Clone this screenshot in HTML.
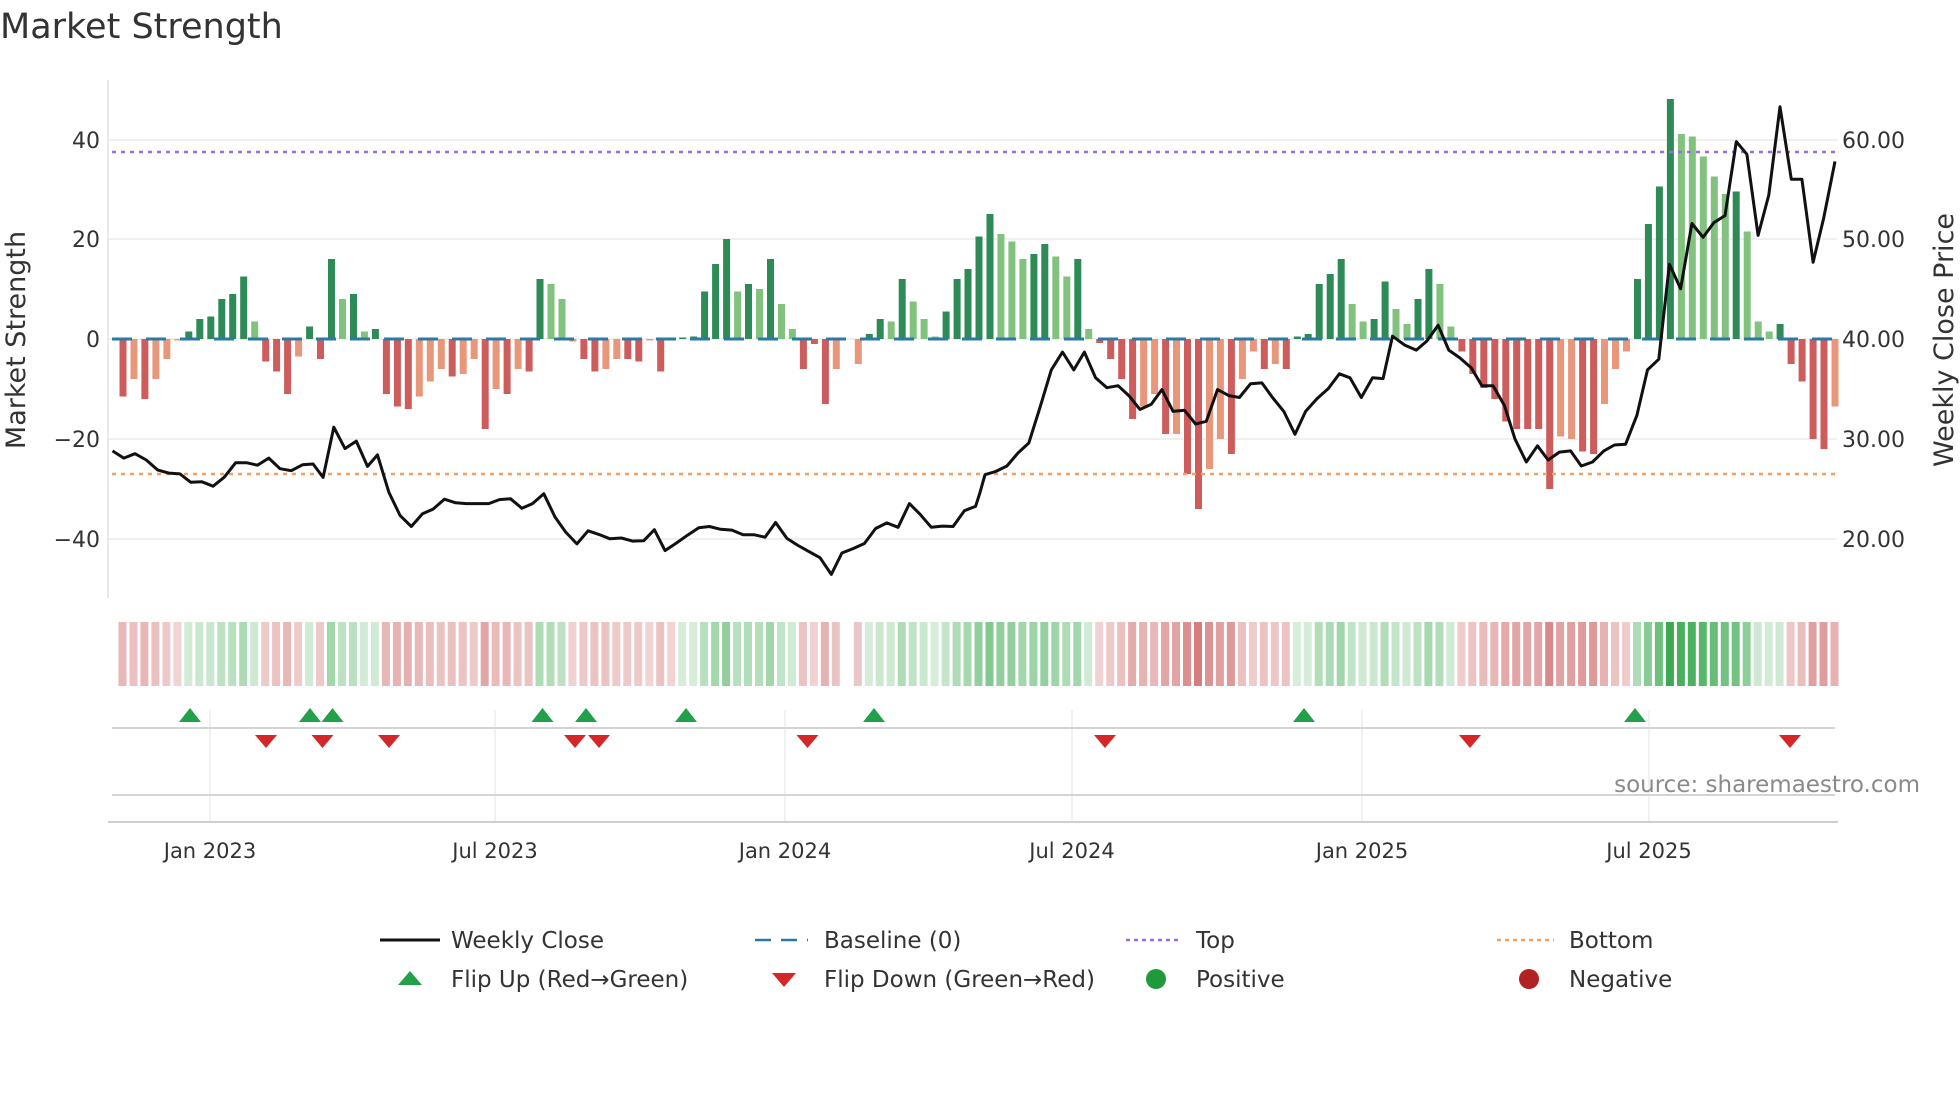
<!DOCTYPE html>
<html><head><meta charset="utf-8">
<style>
html,body{margin:0;padding:0;background:#fff;}
body{width:1960px;height:1102px;overflow:hidden;font-family:"DejaVu Sans","Liberation Sans",sans-serif;}
svg text{font-family:"DejaVu Sans","Liberation Sans",sans-serif;}
</style></head>
<body>
<svg id="s" width="1960" height="1102" xmlns="http://www.w3.org/2000/svg">
<text x="0" y="38" font-size="35" fill="#333">Market Strength</text>
<g stroke="#ececec" stroke-width="1.5">
<line x1="108" y1="140" x2="1837" y2="140"/><line x1="108" y1="239" x2="1837" y2="239"/>
<line x1="108" y1="339" x2="1837" y2="339"/><line x1="108" y1="439" x2="1837" y2="439"/>
<line x1="108" y1="539" x2="1837" y2="539"/>
</g>
<line x1="108" y1="80" x2="108" y2="598" stroke="#e4e4e4" stroke-width="1.5"/>
<g font-size="22" fill="#333" text-anchor="end">
<text x="100" y="148">40</text><text x="100" y="247">20</text><text x="100" y="347">0</text>
<text x="100" y="447">−20</text><text x="100" y="547">−40</text>
</g>
<g font-size="22" fill="#333">
<text x="1842" y="148">60.00</text><text x="1842" y="247">50.00</text><text x="1842" y="347">40.00</text>
<text x="1842" y="447">30.00</text><text x="1842" y="547">20.00</text>
</g>
<text transform="translate(25,340) rotate(-90)" font-size="27" fill="#333" text-anchor="middle">Market Strength</text>
<text transform="translate(1953,340) rotate(-90)" font-size="27" fill="#333" text-anchor="middle">Weekly Close Price</text>
<g id="bars"></g>
<line x1="112" y1="339" x2="1837" y2="339" stroke="#2b7aa6" stroke-width="3" stroke-dasharray="20 14"/>
<line x1="112" y1="152" x2="1837" y2="152" stroke="#9b6ee0" stroke-width="2.5" stroke-dasharray="4 5"/>
<line x1="112" y1="474" x2="1837" y2="474" stroke="#f0a060" stroke-width="2.5" stroke-dasharray="4 5"/>
<polyline id="price" fill="none" stroke="#111" stroke-width="3" stroke-linejoin="round"/>
<g id="heat"></g>
<g stroke="#ececec" stroke-width="1.5">
<line x1="210" y1="710" x2="210" y2="822"/><line x1="495" y1="710" x2="495" y2="822"/>
<line x1="785" y1="710" x2="785" y2="822"/><line x1="1072" y1="710" x2="1072" y2="822"/>
<line x1="1362" y1="710" x2="1362" y2="822"/><line x1="1649" y1="710" x2="1649" y2="822"/>
</g>
<line x1="112" y1="728" x2="1835" y2="728" stroke="#d4d4d4" stroke-width="2"/>
<line x1="112" y1="795" x2="1835" y2="795" stroke="#d4d4d4" stroke-width="2"/>
<line x1="108" y1="822" x2="1838" y2="822" stroke="#cfcfcf" stroke-width="2"/>
<g id="marks"></g>
<text x="1920" y="792" font-size="23" fill="#8a8a8a" text-anchor="end">source: sharemaestro.com</text>
<g font-size="21" fill="#333" text-anchor="middle">
<text x="210" y="858">Jan 2023</text><text x="495" y="858">Jul 2023</text><text x="785" y="858">Jan 2024</text>
<text x="1072" y="858">Jul 2024</text><text x="1362" y="858">Jan 2025</text><text x="1649" y="858">Jul 2025</text>
</g>
<g font-size="23" fill="#333">
<line x1="380" y1="940" x2="440" y2="940" stroke="#111" stroke-width="3"/>
<text x="451" y="948">Weekly Close</text>
<line x1="755" y1="940" x2="808" y2="940" stroke="#2b7aa6" stroke-width="2.5" stroke-dasharray="16 10"/>
<text x="824" y="948">Baseline (0)</text>
<line x1="1126" y1="940" x2="1181" y2="940" stroke="#9b6ee0" stroke-width="2.5" stroke-dasharray="4 4"/>
<text x="1196" y="948">Top</text>
<line x1="1497" y1="940" x2="1554" y2="940" stroke="#f0a060" stroke-width="2.5" stroke-dasharray="4 4"/>
<text x="1569" y="948">Bottom</text>
<polygon points="398,985 422,985 410,971" fill="#22a04a"/>
<text x="451" y="987">Flip Up (Red→Green)</text>
<polygon points="772,973 796,973 784,987" fill="#d62728"/>
<text x="824" y="987">Flip Down (Green→Red)</text>
<circle cx="1156" cy="979" r="10" fill="#1f9a3a"/>
<text x="1196" y="987">Positive</text>
<circle cx="1529" cy="979" r="10" fill="#b22222"/>
<text x="1569" y="987">Negative</text>
</g>
</svg>
<script>
var data="-11.5R -8S -12R -8S -4S -0.3S 1.5D 4D 4.5D 8D 9D 12.5D 3.5L -4.5R -6.5R -11R -3.5S 2.5D -4R 16D 8L 9D 1.5L 2D -11R -13.5R -14R -11.5S -8.5S -6S -7.5R -7S -4S -18R -10S -11R -6S -6.5R 12D 11L 8L -0.5S -4R -6.5R -6S -4S -4R -4.5R -0.3S -6.5R -0.3S 0.3D 0.5D 9.5D 15D 20D 9.5L 11D 10L 16D 7L 2L -6R -1R -13R -6S 0X -5S 1D 4D 3.5L 12D 7.5L 4L 0.5L 5.5D 12D 14D 20.5D 25D 21L 19.5L 16L 17D 19D 16.5L 12.5L 16D 2L -0.8R -4R -8R -16R -13.5S -11S -19R -19S -27R -34R -26S -20S -23R -8S -2.5S -6R -5S -6R 0.5D 1D 11D 13D 16D 7L 3.5L 4D 11.5D 6L 3L 8D 14D 11L 2.5L -2.5R -7R -9.8R -12R -16.5R -18R -18R -18R -30R -19.5S -20S -22.5R -23R -13S -6S -2.5S 12D 23D 30.5D 48D 41L 40.5L 36.5L 32.5L 29L 29.5D 21.5L 3.5L 1.5L 3D -5R -8.5R -20R -22R -13.5S".split(" ");
var col={D:"#2e8a57",L:"#82c27f",R:"#cd5c5c",S:"#e9977a"};
var n=data.length,x0=123,x1=1835,dx=(x1-x0)/(n-1);
var b="",h="";
for(var i=0;i<n;i++){var v=parseFloat(data[i]),c=data[i].slice(-1),x=x0+i*dx;
 if(c!="X"){var y=v>=0?339-v*5:339,hh=Math.abs(v)*5;
 b+='<rect x="'+(x-3.5).toFixed(1)+'" y="'+y.toFixed(1)+'" width="7" height="'+hh.toFixed(1)+'" fill="'+col[c]+'"/>';
 var fc=v>=0?"rgba(60,170,80,"+(0.2+Math.min(v,45)/45*0.8).toFixed(2)+")":"rgba(200,80,80,"+(0.25+Math.min(-v,35)/35*0.5).toFixed(2)+")";
 h+='<rect x="'+(x-4.5).toFixed(1)+'" y="622" width="8" height="64" fill="'+fc+'"/>';}
}
document.getElementById("bars").innerHTML=b;
document.getElementById("heat").innerHTML=h;
var z1=[180,1140,198,1158,216,1147,234,1163,252,1188,270,1196,288,1198,305,1219,323,1218,341,1229,359,1206,377,1170,395,1170,412,1176,430,1158,448,1185,466,1190,484,1175,501,1173,517,1207,534,1080,552,1134,570,1115,588,1179,604,1150,622,1244,640,1303,658,1331,676,1299,693,1287,711,1262,729,1271,746,1273,764,1273,782,1273,799,1263,817,1261,835,1285,852,1273,870,1248,888,1307,905,1345,923,1375,941,1342,958,1351,976,1362,994,1360,1012,1368,1030,1367,1047,1339,1064,1392,1082,1373,1100,1353,1118,1334,1135,1331,1153,1338,1171,1340,1189,1352,1207,1352,1224,1358,1241,1321,1259,1361,1277,1379,1295,1395,1312,1410,1330,1452,1347,1398,1365,1387,1383,1374,1401,1336,1419,1322,1437,1333,1455,1273,1472,1300,1490,1333,1508,1330,1525,1331,1543,1291,1561,1280];
var z2=[0,1245,8,1200,25,1192,43,1178,61,1145,78,1120,96,1030,114,935,132,890,150,935,167,890,185,955,203,980,221,975,238,1000,256,1035,274,1022,291,985,309,1040,327,1037,345,1072,362,1065,380,985,398,1000,415,1005,433,970,451,968,468,1005,486,1040,504,1098,521,1040,539,1008,557,983,575,945,592,955,610,1005,628,955,645,957,660,850,680,873,698,885,715,862,733,822,750,885,768,905,786,930,803,975,821,975,839,1025,856,1110,874,1168,892,1127,909,1163,927,1143,945,1140,962,1178,980,1168,998,1140,1015,1125,1033,1123,1051,1050,1068,935,1086,908,1103,668,1121,730,1139,565,1157,600,1174,563,1192,545,1210,358,1227,390,1245,595,1262,493,1280,270,1298,453,1315,453,1333,663,1350,550,1368,408];
var sy=857/339,p=[];
for(var i=0;i<z1.length;i+=2)p.push((z1[i]/1.6).toFixed(1)+","+(z1[i+1]/sy).toFixed(1));
for(var i=0;i<z2.length;i+=2)p.push((980+z2[i]/1.6).toFixed(1)+","+(z2[i+1]/sy).toFixed(1));
document.getElementById("price").setAttribute("points",p.join(" "));
var up=[190,310,332.5,542.5,586,686,874,1304,1635],dn=[266,322.5,389,575,599,807.5,1105,1470,1790],m="";
up.forEach(function(x){m+='<polygon points="'+(x-11)+',722 '+(x+11)+',722 '+x+',708" fill="#22a04a"/>';});
dn.forEach(function(x){m+='<polygon points="'+(x-11)+',735 '+(x+11)+',735 '+x+',748" fill="#d62728"/>';});
document.getElementById("marks").innerHTML=m;
</script>
</body></html>
